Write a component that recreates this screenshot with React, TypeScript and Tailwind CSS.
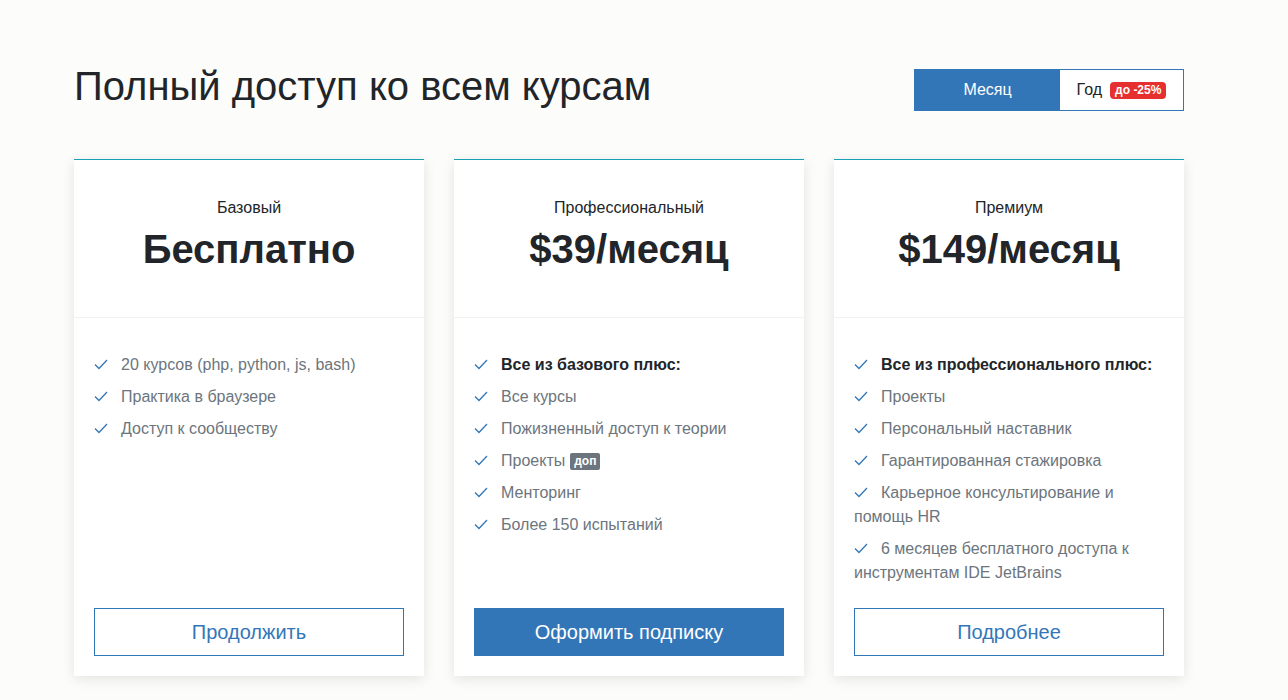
import React from "react";

type Plan = {
  name: string;
  price: string;
  features: { text: string; bold?: boolean; badge?: string }[];
  cta: string;
  primary?: boolean;
};

const plans: Plan[] = [
  {
    name: "Базовый",
    price: "Бесплатно",
    features: [
      { text: "20 курсов (php, python, js, bash)" },
      { text: "Практика в браузере" },
      { text: "Доступ к сообществу" },
    ],
    cta: "Продолжить",
  },
  {
    name: "Профессиональный",
    price: "$39/месяц",
    features: [
      { text: "Все из базового плюс:", bold: true },
      { text: "Все курсы" },
      { text: "Пожизненный доступ к теории" },
      { text: "Проекты", badge: "доп" },
      { text: "Менторинг" },
      { text: "Более 150 испытаний" },
    ],
    cta: "Оформить подписку",
    primary: true,
  },
  {
    name: "Премиум",
    price: "$149/месяц",
    features: [
      { text: "Все из профессионального плюс:", bold: true },
      { text: "Проекты" },
      { text: "Персональный наставник" },
      { text: "Гарантированная стажировка" },
      { text: "Карьерное консультирование и помощь HR" },
      { text: "6 месяцев бесплатного доступа к инструментам IDE JetBrains" },
    ],
    cta: "Подробнее",
  },
];

function CheckMark() {
  return (
    <svg
      width="14"
      height="14"
      viewBox="0 0 14 14"
      className="inline-block align-[-1px] mr-[13px] text-[#3376b8]"
      fill="none"
      stroke="currentColor"
      strokeWidth="1.3"
    >
      <polyline points="1,7.5 5,11.5 13,3" />
    </svg>
  );
}

function PlanCard({ plan }: { plan: Plan }) {
  return (
    <div className="flex flex-col bg-white shadow-[0_3px_12px_rgba(0,0,0,0.1)]">
      {/* teal accent line */}
      <div className="h-px bg-[#1aa0b4]" />

      {/* Header */}
      <div className="pt-[36px] pb-[44px] text-center border-b border-[#f2f2f2]">
        <div className="text-[16px] leading-[24px] text-[#212529]">{plan.name}</div>
        <div className="mt-[5px] text-[40px] leading-[48px] font-bold text-[#212529]">
          {plan.price}
        </div>
      </div>

      {/* Features */}
      <div className="flex flex-1 flex-col px-[20px] pt-[35px] pb-[20px]">
        <ul className="mb-[15px]">
          {plan.features.map((f) => (
            <li
              key={f.text}
              className={
                f.bold
                  ? "mb-[8px] text-[16px] leading-[24px] font-bold text-[#212529]"
                  : "mb-[8px] text-[16px] leading-[24px] text-[#6c757d]"
              }
            >
              <CheckMark />
              {f.text}
              {f.badge && (
                <span className="ml-[5px] inline-block rounded-[2px] bg-[#6c757d] px-[4px] text-[12px] leading-[17px] font-bold text-white align-[1px]">
                  {f.badge}
                </span>
              )}
            </li>
          ))}
        </ul>

        <div className="mt-auto">
          {plan.primary ? (
            <button className="h-[48px] w-full bg-[#3376b8] text-[20px] text-white border border-[#3376b8]">
              {plan.cta}
            </button>
          ) : (
            <button className="h-[48px] w-full bg-white text-[20px] text-[#3376b8] border border-[#3376b8]">
              {plan.cta}
            </button>
          )}
        </div>
      </div>
    </div>
  );
}

export default function App() {
  return (
    <main
      className="min-h-screen bg-[#fcfcfa]"
      style={{ fontFamily: '"Liberation Sans", Arial, sans-serif' }}
    >
      <div className="ml-[74px] w-[1110px] pt-[62px] pb-[24px]">
        <div className="flex items-start justify-between">
          <h1 className="text-[40px] leading-[48px] font-normal text-[#212529]">
            Полный доступ ко всем курсам
          </h1>
          <div className="mt-[7px] flex h-[42px] border border-[#3376b8]">
            <button className="w-[145px] bg-[#3376b8] text-[16px] text-white">Месяц</button>
            <button className="flex w-[123px] items-center justify-center gap-[8px] bg-white text-[16px] text-[#212529]">
              Год
              <span className="rounded-[4px] bg-[#e5302f] px-[5px] text-[12px] leading-[17px] font-bold text-white">
                до -25%
              </span>
            </button>
          </div>
        </div>

        <div className="mt-[48px] grid grid-cols-3 gap-[30px]">
          {plans.map((p) => (
            <PlanCard key={p.name} plan={p} />
          ))}
        </div>
      </div>
    </main>
  );
}
